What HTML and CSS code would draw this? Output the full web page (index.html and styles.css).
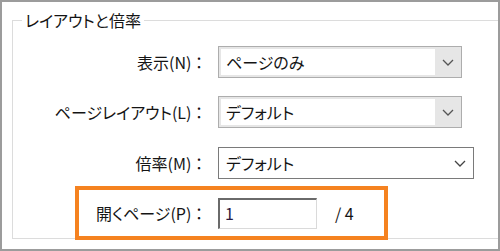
FILE: index.html
```html
<!DOCTYPE html>
<html>
<head>
<title>レイアウトと倍率</title>
<link rel="stylesheet" href="styles.css">
</head>
<body>

<div class="frame">
  <fieldset class="group">
    <legend>レイアウトと倍率</legend>

    <!-- 表示 -->
    <div class="row first">
      <label class="label">表示(N) ：</label>
      <div class="combo">
        <span class="comboText">ページのみ</span>
        <span class="comboButton"><svg width="12" height="7" viewBox="0 0 12 7"><path d="M1 1l5 5 5-5" fill="none" stroke="#555" stroke-width="1.3"/></svg></span>
      </div>
    </div>

    <!-- ページレイアウト -->
    <div class="row second">
      <label class="label">ページレイアウト(L) ：</label>
      <div class="combo">
        <span class="comboText">デフォルト</span>
        <span class="comboButton"><svg width="12" height="7" viewBox="0 0 12 7"><path d="M1 1l5 5 5-5" fill="none" stroke="#555" stroke-width="1.3"/></svg></span>
      </div>
    </div>

    <!-- 倍率 -->
    <div class="row third">
      <label class="label">倍率(M) ：</label>
      <div class="combo editable">
        <span class="comboText">デフォルト</span>
        <span class="comboButton"><svg width="12" height="7" viewBox="0 0 12 7"><path d="M1 1l5 5 5-5" fill="none" stroke="#444" stroke-width="1.3"/></svg></span>
      </div>
    </div>

    <!-- 開くページ (highlighted) -->
    <div class="row highlight">
      <label class="label">開くページ(P) ：</label>
      <div class="pageInput">1</div>
      <span class="pageCount">/ 4</span>
    </div>
  </fieldset>
</div>

</body>
</html>
```

FILE: styles.css
```css
:root {
  --frame-border: #9c9c9c;
  --group-border: #dcdcdc;
  --text-color: #141414;
  --combo-border: #adadad;
  --combo-bg: #e6e6e6;
  --accent: #f58220;
}

body {
  margin: 0;
  background-color: #ffffff;
  color: var(--text-color);
  font-family: "Noto Sans CJK JP", "Noto Sans", sans-serif;
  font-feature-settings: "palt"; /* proportional kana, closer to Meiryo UI */
}

.frame {
  width: 500px;
  height: 251px;
  box-sizing: border-box;
  border: 2px solid var(--frame-border);
  overflow: hidden;
}

.group {
  margin: 7px -20px 0 10px;
  padding: 0;
  height: 230px;
  box-sizing: border-box;
  border: 1px solid var(--group-border);
}

.group legend {
  margin-left: 9px;
  padding: 0 3px;
  font-size: 16px;
  line-height: 22px;
}

.row {
  display: flex;
  align-items: center;
  gap: 13px;
  font-size: 16px;
}

.label {
  width: 192px;
  box-sizing: border-box;
  padding-right: 2px;
  text-align: right;
  white-space: nowrap;
}

.first {
  margin-top: 15px; /* select top at y=47 */
}

.second {
  margin-top: 18px;
}

.third {
  margin-top: 19px;
}

.combo {
  display: flex;
  width: 244px;
  height: 32px;
  box-sizing: border-box;
  border: 1px solid var(--combo-border);
  background-color: var(--combo-bg);
  padding: 2px 0 2px 2px;
}

.comboText {
  flex-grow: 1;
  background-color: #ffffff;
  padding-left: 5px;
  line-height: 26px;
}

.comboButton {
  width: 26px;
  display: flex;
  align-items: center;
  justify-content: center;
}

.combo.editable {
  width: 256px;
  border-color: #7a7a7a;
  background-color: #ffffff;
}

.highlight {
  margin: 7px 0 0 62px;
  width: 313px;
  height: 54px;
  box-sizing: border-box;
  border: 4px solid var(--accent);
}

.highlight .label {
  width: 126px;
}

.pageInput {
  width: 99px;
  height: 31px;
  box-sizing: border-box;
  border: 1px solid #dadada;
  border-top: 2px solid #6a6a6a;
  border-left: 2px solid #6a6a6a;
  padding-left: 5px;
  line-height: 27px;
  color: #2a1a40;
}

.pageCount {
  margin-left: 5px;
}
```
